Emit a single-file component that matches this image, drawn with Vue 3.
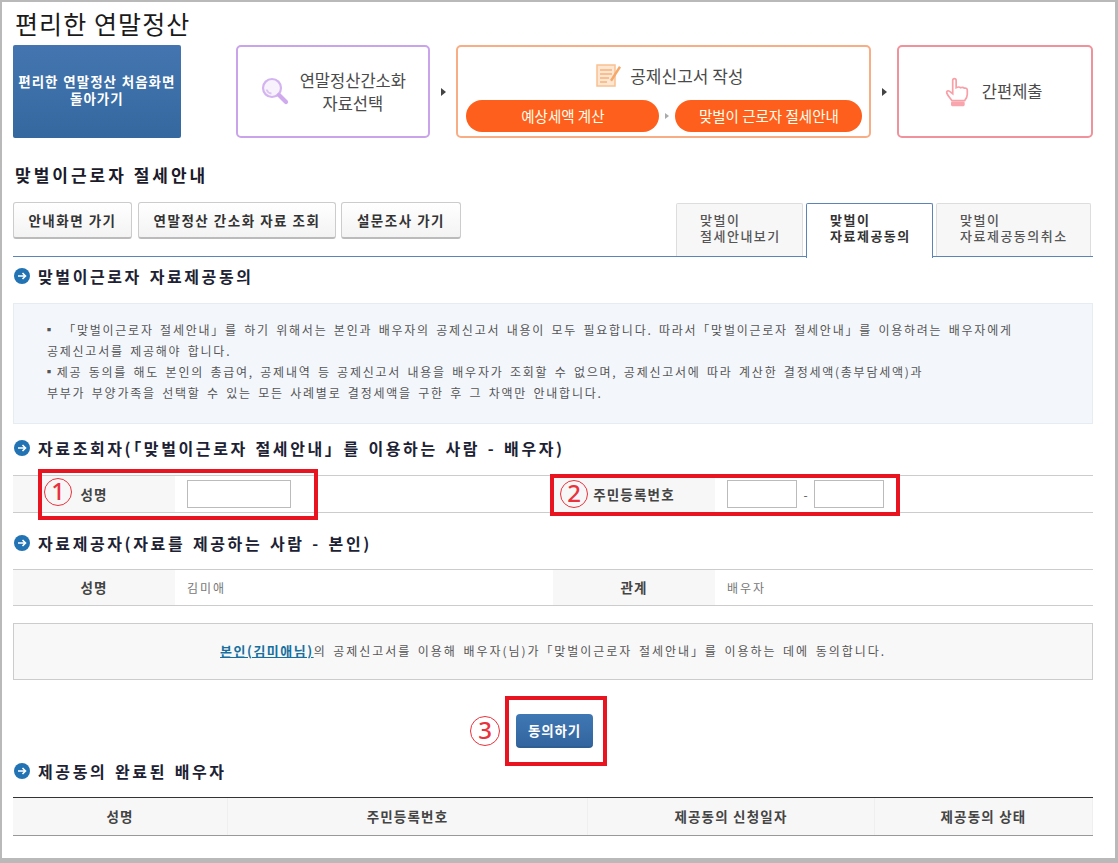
<script setup>
const tabs = [
  { a: '맞벌이', b: '절세안내보기', on: false, w: 127 },
  { a: '맞벌이', b: '자료제공동의', on: true, w: 127 },
  { a: '맞벌이', b: '자료제공동의취소', on: false, w: 155 }
]
const cols = [
  { t: '성명', w: 215 },
  { t: '주민등록번호', w: 360 },
  { t: '제공동의 신청일자', w: 287 },
  { t: '제공동의 상태', w: 218 }
]
</script>

<template>
  <div class="page">
    <h1 class="title">편리한 연말정산</h1>

    <div class="steps">
      <div class="home">편리한 연말정산 처음화면<br />돌아가기</div>
      <div class="step purple">
        <svg viewBox="0 0 30 30" width="30" height="30">
          <circle cx="11" cy="11" r="9" fill="#f8f2fd" stroke="#d3b4f0" stroke-width="2.2" />
          <path d="M5.500 12.500a6 6 0 0 0 5 4" fill="none" stroke="#dcc5f2" stroke-width="1.800" />
          <path d="M18 18l7 7" stroke="#cfaaee" stroke-width="4.200" stroke-linecap="round" />
        </svg>
        <span class="step-txt">연말정산간소화<br />자료선택</span>
      </div>
      <span class="arrow"></span>
      <div class="step orange">
        <div class="orange-top">
          <svg viewBox="0 0 28 24" width="28" height="24">
            <rect x="2" y="2" width="18" height="21" fill="#fde7d3" stroke="#f9c090" stroke-width="1.500" />
            <path d="M5 7h12M5 11h12M5 15h9M5 19h7" stroke="#f7b27c" stroke-width="1.500" />
            <path d="M15 17l9-14 2 1.500-9 14z" fill="#f6a868" />
          </svg>
          <span>공제신고서 작성</span>
        </div>
        <div class="pills">
          <span class="pill p1">예상세액 계산</span>
          <span class="arrow small"></span>
          <span class="pill p2">맞벌이 근로자 절세안내</span>
        </div>
      </div>
      <span class="arrow"></span>
      <div class="step pink">
        <svg viewBox="0 0 28 36" width="24" height="32">
          <path d="M9 20V4.500a2 2 0 0 1 4 0V13c2-1 4-1 5 0 2-.8 3.500-.6 4.500.5 2-.5 3.500.5 3.500 2.500v5c0 3-1.500 5-3 7H8c-2-3-5-6-6-9-.5-2 1.500-3 3-2z" fill="#fff" stroke="#f7a0a8" stroke-width="2" />
          <rect x="7" y="29" width="16" height="5.500" rx="1.500" fill="#f9a5ad" />
        </svg>
        <span class="step-txt">간편제출</span>
      </div>
    </div>

    <h2 class="sub">맞벌이근로자 절세안내</h2>

    <div class="nav">
      <div class="btns">
        <button class="btn b1">안내화면 가기</button>
        <button class="btn b2">연말정산 간소화 자료 조회</button>
        <button class="btn b3">설문조사 가기</button>
      </div>
      <div class="tabs">
        <div v-for="t in tabs" :key="t.b" class="tab" :class="{ on: t.on }" :style="{ width: t.w + 'px' }">{{ t.a }}<br />{{ t.b }}</div>
      </div>
    </div>

    <h3 class="sec s1">
      <svg class="dot" viewBox="0 0 16 16" width="16" height="16">
        <circle cx="8" cy="8" r="8" fill="#2273b3" />
        <path d="M4 8h7M8.500 5l3 3-3 3" fill="none" stroke="#fff" stroke-width="1.600" />
      </svg>
      맞벌이근로자 자료제공동의
    </h3>

    <div class="info">
      <p class="bul">▪ 「맞벌이근로자 절세안내」를 하기 위해서는 본인과 배우자의 공제신고서 내용이 모두 필요합니다. 따라서「맞벌이근로자 절세안내」를 이용하려는 배우자에게</p>
      <p>공제신고서를 제공해야 합니다.</p>
      <p class="bul">▪제공 동의를 해도 본인의 총급여, 공제내역 등 공제신고서 내용을 배우자가 조회할 수 없으며, 공제신고서에 따라 계산한 결정세액(총부담세액)과</p>
      <p>부부가 부양가족을 선택할 수 있는 모든 사례별로 결정세액을 구한 후 그 차액만 안내합니다.</p>
    </div>

    <h3 class="sec s2">
      <svg class="dot" viewBox="0 0 16 16" width="16" height="16">
        <circle cx="8" cy="8" r="8" fill="#2273b3" />
        <path d="M4 8h7M8.500 5l3 3-3 3" fill="none" stroke="#fff" stroke-width="1.600" />
      </svg>
      자료조회자(「맞벌이근로자 절세안내」를 이용하는 사람 - 배우자)
    </h3>

    <div class="row r1">
      <div class="th">성명</div>
      <div class="td"><span class="inp w1"></span></div>
      <div class="th">주민등록번호</div>
      <div class="td"><span class="inp w2"></span><span class="dash">-</span><span class="inp w2"></span></div>
    </div>

    <h3 class="sec s3">
      <svg class="dot" viewBox="0 0 16 16" width="16" height="16">
        <circle cx="8" cy="8" r="8" fill="#2273b3" />
        <path d="M4 8h7M8.500 5l3 3-3 3" fill="none" stroke="#fff" stroke-width="1.600" />
      </svg>
      자료제공자(자료를 제공하는 사람 - 본인)
    </h3>

    <div class="row r2">
      <div class="th">성명</div>
      <div class="td val">김미애</div>
      <div class="th">관계</div>
      <div class="td val">배우자</div>
    </div>

    <div class="agree"><a>본인(김미애님)</a>의 공제신고서를 이용해 배우자(님)가「맞벌이근로자 절세안내」를 이용하는 데에 동의합니다.</div>

    <div class="act"><button class="go">동의하기</button></div>

    <h3 class="sec s4">
      <svg class="dot" viewBox="0 0 16 16" width="16" height="16">
        <circle cx="8" cy="8" r="8" fill="#2273b3" />
        <path d="M4 8h7M8.500 5l3 3-3 3" fill="none" stroke="#fff" stroke-width="1.600" />
      </svg>
      제공동의 완료된 배우자
    </h3>

    <div class="grid">
      <div v-for="c in cols" :key="c.t" class="gh" :style="{ width: c.w + 'px' }">{{ c.t }}</div>
    </div>

    <div class="mark m1"></div>
    <div class="mark m2"></div>
    <div class="mark m3"></div>
    <span class="num n1">1</span>
    <span class="num n2">2</span>
    <span class="num n3">3</span>
  </div>
</template>

<style>
html, body { margin: 0; background: #b9b9b9; }
</style>

<style scoped>
.page {
  position: relative;
  box-sizing: border-box;
  width: 1113px;
  height: 856px;
  margin: 2px 0 0 2px;
  padding: 0 22px 0 11px;
  background: #fff;
  font-family: "Noto Sans CJK KR", "Noto Sans", sans-serif;
  color: #333;
}
.title { margin: 0; padding: 6px 0 0 2px; height: 36px; box-sizing: border-box; font-size: 25px; line-height: 30px; font-weight: 400; color: #1a1a1a; letter-spacing: 1.100px; }
.steps { display: flex; align-items: center; height: 93px; margin-top: 7px; }
.home { width: 168px; height: 93px; margin-right: 55px; box-sizing: border-box; padding-top: 29px; border-radius: 2px; background: linear-gradient(#4475b0, #35689f); color: #fff; font-family: "Liberation Sans", "Noto Sans CJK KR", sans-serif; font-size: 13.500px; line-height: 17px; font-weight: 700; text-align: center; letter-spacing: 1px; white-space: nowrap; }
.step { box-sizing: border-box; height: 93px; border: 2px solid; border-radius: 5px; background: #fff; }
.purple { width: 195px; border-color: #c9a4ea; display: flex; align-items: center; padding-left: 23px; gap: 9px; }
.step-txt { font-size: 16.500px; line-height: 23px; text-align: center; color: #4a4a4a; }
.arrow { flex: none; width: 0; height: 0; margin: 0 10px 0 11px; border-left: 5px solid #444; border-top: 4px solid transparent; border-bottom: 4px solid transparent; }
.arrow.small { margin: 0 6px; border-left-color: #aaa; border-left-width: 4px; border-top-width: 3px; border-bottom-width: 3px; }
.orange { width: 415px; border-color: #f8ad84; padding: 9px 7px 0 8px; }
.orange-top { display: flex; align-items: center; justify-content: center; gap: 7px; height: 38px; padding-left: 10px; font-size: 17px; color: #4a4a4a; }
.pills { display: flex; align-items: center; margin-top: 6px; }
.pill { flex: none; height: 32px; box-sizing: border-box; border-radius: 16px; background: #ff5f1c; color: #ffe; font-size: 14.500px; line-height: 31px; text-align: center; }
.p1 { width: 193px; }
.p2 { width: 187px; }
.pink { width: 196px; border-color: #f0929c; display: flex; align-items: center; justify-content: center; gap: 13px; padding-right: 3px; }
.sub { margin: 25px 0 0 2px; font-size: 17px; line-height: 24px; font-weight: 700; color: #1a1a2a; letter-spacing: 3px; }
.nav { display: flex; justify-content: space-between; width: 1080px; height: 55px; margin-top: 15px; box-sizing: border-box; border-bottom: 1.500px solid #5d84b7; }
.btns { display: flex; gap: 6px; align-self: flex-start; }
.btn { height: 37px; padding: 0; box-sizing: border-box; border: 1px solid #ccc; border-bottom: 2px solid #bbb; border-radius: 3px; background: linear-gradient(#fff, #f3f3f3); font-family: inherit; font-size: 13.500px; font-weight: 700; color: #333; letter-spacing: 1.500px; white-space: nowrap; }
.b1 { width: 119px; }
.b2 { width: 198px; margin-right: -1px; }
.b3 { width: 120px; }
.tabs { display: flex; align-items: flex-end; gap: 3px; margin-right: 2px; }
.tab { height: 53.500px; box-sizing: border-box; padding: 9px 0 0 23px; border: 1px solid #ddd; border-bottom: 0; border-radius: 2px 2px 0 0; background: #f7f7f7; font-family: "Liberation Sans", "Noto Sans CJK KR", sans-serif; font-size: 13px; line-height: 16px; font-weight: 500; color: #555; letter-spacing: 1.500px; white-space: nowrap; }
.tab.on { height: 55px; margin-bottom: -1.500px; background: #fff; border: 1px solid #5d84b7; border-bottom: 0; color: #333; font-weight: 700; }
.sec { display: flex; align-items: center; margin: 0 0 0 1px; font-size: 16px; line-height: 22px; font-weight: 700; color: #1c2233; letter-spacing: 2.600px; word-spacing: 1.500px; white-space: nowrap; }
.dot { flex: none; margin-right: 8px; }
.s1 { margin-top: 8px; }
.info { width: 1080px; height: 121px; margin-top: 16px; box-sizing: border-box; padding: 15px 0 0 33px; background: #f3f7fc; border: 1px solid #e6ecf3; }
.info p { margin: 0; height: 21px; font-size: 12px; line-height: 21px; color: #555; letter-spacing: 1.750px; word-spacing: 2px; white-space: nowrap; }
.info .bul { margin-left: -4px; }
.s2 { margin-top: 13px; }
.row { display: grid; grid-template-columns: 162px 378px 162px 378px; width: 1080px; box-sizing: border-box; border-top: 1px solid #ccc; border-bottom: 1px solid #ccc; }
.r1 { height: 38px; margin-top: 16px; }
.r2 { height: 37px; margin-top: 15px; }
.th { display: flex; align-items: center; justify-content: center; padding-bottom: 1px; background: #f7f7f7; font-size: 13.500px; font-weight: 700; color: #444; letter-spacing: 1.200px; }
.td { display: flex; align-items: center; padding-left: 12px; }
.val { padding-bottom: 1px; font-size: 12px; color: #777; letter-spacing: 2px; }
.inp { display: block; height: 28px; box-sizing: border-box; background: #fff; border: 1px solid #bbb; }
.w1 { width: 104px; }
.w2 { width: 70px; }
.dash { width: 17px; text-align: center; font-size: 12px; color: #555; }
.s3 { margin-top: 19px; }
.agree { width: 1080px; height: 57px; margin-top: 17px; box-sizing: border-box; border: 1.500px solid #ccc; background: #f8f8f8; font-size: 12px; line-height: 53px; color: #555; text-align: center; letter-spacing: 1.950px; word-spacing: 2px; white-space: nowrap; }
.agree a { color: #15709f; font-weight: 700; text-decoration: underline; font-size: 13px; letter-spacing: 1.500px; }
.act { display: flex; width: 1080px; margin-top: 34px; padding-left: 503px; box-sizing: border-box; }
.go { width: 77px; height: 34px; padding: 0; border: 0; border-bottom: 2px solid #2f5f92; border-radius: 4px; background: linear-gradient(#3f78b4, #33659f); color: #fff; font-family: inherit; font-size: 13.500px; font-weight: 700; letter-spacing: .8px; }
.s4 { margin-top: 12px; }
.grid { display: flex; width: 1080px; height: 38.500px; margin-top: 15px; box-sizing: border-box; border-top: 1.500px solid #333; border-bottom: 1.500px solid #999; background: #f7f7f7; }
.gh { display: flex; align-items: center; justify-content: center; box-sizing: border-box; font-size: 13.500px; font-weight: 700; color: #444; letter-spacing: 1.200px; border-right: 1px solid #efefef; }
.mark { position: absolute; box-sizing: border-box; border: 4px solid #e8141f; }
.m1 { left: 36px; top: 467px; width: 280px; height: 51px; }
.m2 { left: 548px; top: 472px; width: 350px; height: 42px; }
.m3 { left: 503px; top: 694px; width: 102px; height: 70px; }
.num { position: absolute; box-sizing: border-box; width: 28px; height: 28px; border: 1.500px solid #e8323c; border-radius: 50%; color: #e8323c; font-family: "Noto Sans", sans-serif; font-size: 24px; font-weight: 500; line-height: 24px; text-align: center; }
.n1 { left: 42px; top: 476px; }
.n2 { left: 558px; top: 478px; }
.n3 { left: 468px; top: 714px; width: 30px; height: 30px; line-height: 26px; }
</style>
